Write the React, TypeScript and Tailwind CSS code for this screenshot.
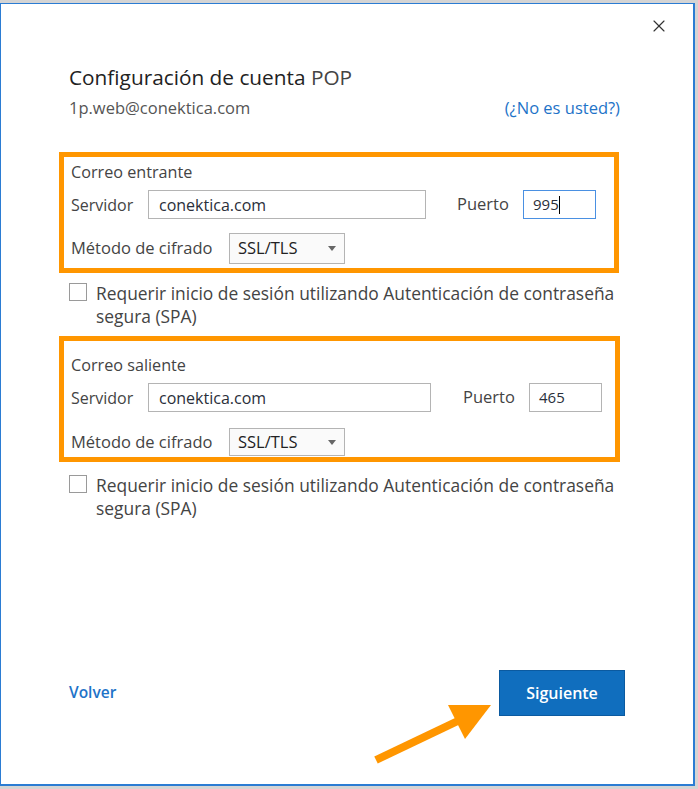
import { X } from 'lucide-react';

interface FieldRowProps {
    serverWidth: string;
    gap: string;
    port: string;
    focused?: boolean;
}

const font = { fontFamily: '"Open Sans", "Noto Sans", sans-serif' };

function ServerRow({ serverWidth, gap, port, focused }: FieldRowProps) {
    return (
        <div className="flex items-center h-[29px]">
            <div className="w-[77px] text-[16px] text-[#444]">Servidor</div>
            <div
                className={`${serverWidth} h-full border border-[#b4b4b4] flex items-center pl-[10px] text-[16px] text-[#2a2f3a]`}
            >
                conektica.com
            </div>
            <div className={`${gap} w-[66px] text-[16.5px] text-[#444]`}>Puerto</div>
            <div
                className={`w-[73px] h-full border flex items-center pl-[9px] text-[15px] text-[#2a2f3a] ${
                    focused ? 'border-[#4a90e2]' : 'border-[#b4b4b4]'
                }`}
            >
                {port}
                {focused && <span className="inline-block w-px h-[18px] bg-black" />}
            </div>
        </div>
    );
}

function CipherRow({ extra }: { extra: string }) {
    return (
        <div className={`flex items-center ${extra}`}>
            <div className="w-[158px] text-[16.5px] text-[#444]">Método de cifrado</div>
            <div className="w-[116px] h-full border border-[#b4b4b4] bg-[#fafafa] flex items-center justify-between pl-[8px] pr-[8px] text-[16.5px] text-[#222]">
                SSL/TLS
                <span className="w-0 h-0 border-l-[4px] border-r-[4px] border-t-[5px] border-l-transparent border-r-transparent border-t-[#666]" />
            </div>
        </div>
    );
}

function SpaCheck({ extra }: { extra: string }) {
    return (
        <div className={`flex ${extra} pl-[10px]`}>
            <div className="w-[18px] h-[18px] border border-[#9a9a9a] bg-white mt-[1px] shrink-0" />
            <div className="ml-[9px] text-[17.4px] leading-[23px] text-[#444] whitespace-nowrap">
                Requerir inicio de sesión utilizando Autenticación de contraseña
                <br />
                segura (SPA)
            </div>
        </div>
    );
}

export default function App() {
    return (
        <div className="w-[698px] h-[789px] bg-[#d4d4d4] pt-[3px] relative overflow-hidden" style={font}>
            <div className="w-[695px] h-[783px] bg-white border-t border-l border-r-2 border-b-2 border-[#2b7cd3] flex flex-col">
                <div className="h-[44px] flex justify-end items-center pr-[24px]">
                    <X size={20} strokeWidth={1.4} className="text-[#333]" />
                </div>

                <div className="pl-[68px] pr-[73px] mt-[15px] text-[20.8px] leading-[28px] text-[#222]">
                    Configuración de cuenta <span className="text-[#444]">POP</span>
                </div>
                <div className="pl-[68px] pr-[73px] mt-[7px] flex justify-between text-[16.5px] leading-[20px]">
                    <span className="text-[#555]">1p.web@conektica.com</span>
                    <span className="text-[#1e73c8]">(¿No es usted?)</span>
                </div>

                <div className="ml-[58px] w-[560px] mt-[34px] border-[5px] border-[#ff9600] pl-[7px] pt-[5px] pb-[4px]">
                    <div className="text-[16.2px] leading-[20px] text-[#444]">Correo entrante</div>
                    <div className="mt-[8px]">
                        <ServerRow serverWidth="w-[278px]" gap="ml-[31px]" port="995" focused />
                    </div>
                    <CipherRow extra="mt-[14px] h-[31px]" />
                </div>

                <SpaCheck extra="mt-[9px] ml-[58px]" />

                <div className="ml-[58px] w-[561px] mt-[8px] border-[5px] border-[#ff9600] pl-[7px] pt-[14px] pb-[1px]">
                    <div className="text-[16.2px] leading-[20px] text-[#444]">Correo saliente</div>
                    <div className="mt-[8px]">
                        <ServerRow serverWidth="w-[283px]" gap="ml-[32px]" port="465" />
                    </div>
                    <CipherRow extra="mt-[16px] h-[28px]" />
                </div>

                <SpaCheck extra="mt-[12px] ml-[58px]" />

                <div className="mt-auto mb-[68px] pl-[68px] pr-[68px] flex items-center justify-between">
                    <span className="text-[15.5px] font-semibold text-[#1e73c8]">Volver</span>
                    <div className="w-[126px] h-[46px] bg-[#106ebe] border border-[#0b5aa0] flex items-center justify-center text-[16px] font-semibold text-white">
                        Siguiente
                    </div>
                </div>
            </div>

            <svg className="absolute left-0 top-0" width="698" height="789" viewBox="0 0 698 789">
                <line x1="376" y1="760" x2="462" y2="719" stroke="#ff9600" strokeWidth="8" />
                <polygon points="491,705 448,705 465,739" fill="#ff9600" />
            </svg>
        </div>
    );
}
